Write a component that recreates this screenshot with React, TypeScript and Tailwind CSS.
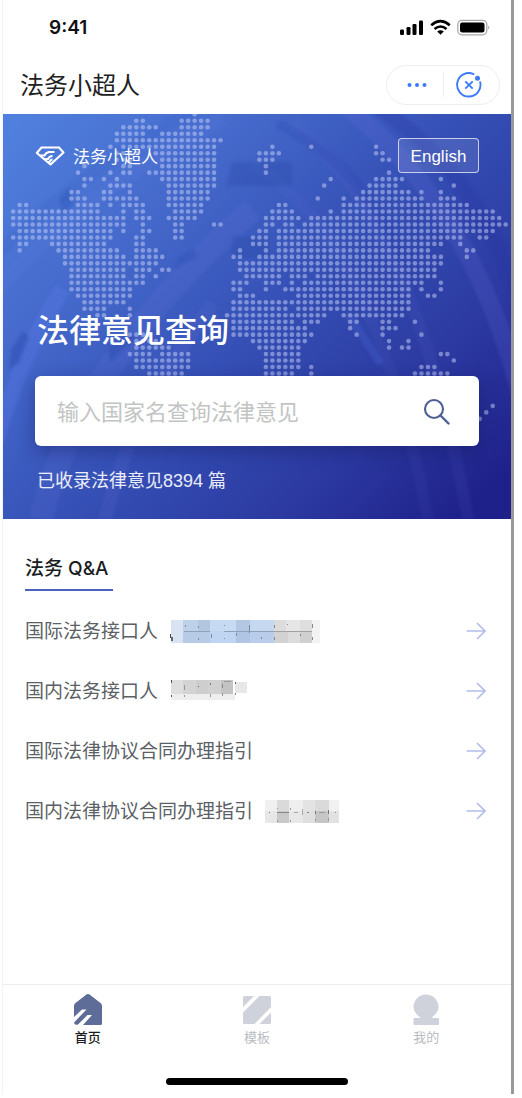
import React from "react";

const CJK = "font-['Inter','Noto_Sans_CJK_SC',sans-serif]";

type Span = [number, number];

// Dotted world map: for each row, the filled column spans.
const MAP_ROWS: Record<number, Span[]> = {
  [-1]: [[28, 28]],
  0: [[19, 20], [26, 30]],
  1: [[17, 22], [26, 30]],
  2: [[16, 20], [23, 29]],
  3: [[16, 32]],
  4: [[15, 15], [17, 31], [40, 40], [46, 46], [56, 56]],
  5: [[16, 19], [22, 31], [38, 41], [56, 57]],
  6: [[16, 18], [23, 31], [38, 40], [57, 58]],
  7: [[11, 11], [17, 18], [23, 31], [39, 39]],
  8: [[10, 10], [15, 15], [17, 18], [21, 31], [39, 39], [58, 58]],
  9: [[11, 12], [14, 14], [16, 16], [23, 31], [49, 49], [56, 60], [66, 66]],
  10: [[11, 11], [15, 18], [24, 31], [48, 48], [55, 59], [68, 68]],
  11: [[9, 10], [14, 15], [18, 18], [24, 30], [54, 61], [63, 63], [66, 66]],
  12: [[9, 11], [14, 19], [24, 30], [47, 47], [51, 51], [53, 63], [66, 68]],
  13: [[1, 2], [10, 13], [15, 15], [17, 20], [24, 29], [41, 42], [51, 70]],
  14: [[0, 13], [17, 17], [19, 20], [25, 29], [40, 43], [49, 49], [51, 74]],
  15: [[0, 17], [19, 21], [24, 28], [39, 44], [46, 75]],
  16: [[0, 17], [20, 20], [25, 26], [31, 32], [39, 40], [42, 43], [45, 76]],
  17: [[1, 15], [17, 17], [20, 21], [25, 26], [38, 39], [41, 74]],
  18: [[0, 15], [19, 20], [25, 26], [37, 39], [41, 69], [72, 73]],
  19: [[1, 2], [6, 14], [19, 20], [37, 39], [41, 66], [69, 69]],
  20: [[1, 1], [7, 16], [19, 22], [35, 35], [39, 39], [41, 64], [70, 71]],
  21: [[8, 17], [19, 23], [34, 35], [38, 66], [70, 70]],
  22: [[8, 22], [35, 66]],
  23: [[9, 17], [19, 21], [23, 24], [35, 65]],
  24: [[9, 17], [19, 20], [22, 22], [36, 41], [43, 45], [47, 65]],
  25: [[9, 20], [34, 36], [39, 41], [43, 43], [45, 63], [66, 66]],
  26: [[9, 18], [34, 35], [39, 39], [42, 61], [63, 63], [66, 66]],
  27: [[10, 18], [35, 37], [44, 61], [64, 65]],
  28: [[11, 17], [34, 61]],
  29: [[11, 14], [18, 18], [34, 42], [44, 61]],
  30: [[13, 14], [18, 18], [33, 48], [51, 60]],
  31: [[34, 43], [45, 47], [52, 53], [57, 58], [62, 62]],
  32: [[34, 45], [52, 52], [57, 59]],
  33: [[18, 21], [34, 46], [53, 53], [57, 57], [63, 63]],
  34: [[19, 22], [37, 45], [58, 58], [61, 61]],
  35: [[19, 24], [38, 44], [58, 58], [60, 61]],
  36: [[18, 21], [23, 27], [39, 44], [66, 67]],
  37: [[19, 27], [39, 44], [68, 68]],
  38: [[19, 27], [39, 44], [46, 46], [63, 65]],
  39: [[21, 26], [39, 43], [46, 46], [62, 67]],
  44: [[74, 74]],
  45: [[73, 73]],
  46: [[72, 72]],
};

const DOTS = Object.entries(MAP_ROWS).flatMap(([row, spans]) =>
  spans.flatMap(([from, to]) =>
    Array.from({ length: to - from + 1 }, (_, i) => ({
      x: 10.2 + (from + i) * 6.48,
      y: 6.8 + Number(row) * 6.48,
    })),
  ),
);

function HeroArt() {
  return (
    <svg
      aria-hidden="true"
      className="absolute inset-0 h-full w-full"
      viewBox="0 0 508 405"
      preserveAspectRatio="none"
    >
      <defs>
        <linearGradient id="sky" gradientUnits="userSpaceOnUse" x1="20" y1="0" x2="440" y2="420">
          <stop offset="0" stopColor="#5080dd" />
          <stop offset="0.25" stopColor="#466bcd" />
          <stop offset="0.55" stopColor="#344eb4" />
          <stop offset="0.8" stopColor="#2b389f" />
          <stop offset="1" stopColor="#1f218a" />
        </linearGradient>
        <filter id="soft">
          <feGaussianBlur stdDeviation="1.5" />
        </filter>
      </defs>
      <rect width="508" height="405" fill="url(#sky)" />
      <g fill="none" filter="url(#soft)" opacity="0.6">
        <path d="M-10 145 Q60 70 190 -5" stroke="#2c55bd" strokeOpacity=".25" strokeWidth="12" />
        <path d="M-10 180 Q70 85 220 5" stroke="#6d8ae8" strokeOpacity=".16" strokeWidth="14" />
        <path d="M38 405 Q75 250 250 95" stroke="#7d82e6" strokeOpacity=".2" strokeWidth="24" />
        <path d="M-8 330 Q20 235 60 175" stroke="#5d7ff0" strokeOpacity=".45" strokeWidth="16" />
        <path d="M102 405 Q130 290 210 190" stroke="#7d82e6" strokeOpacity=".18" strokeWidth="14" />
        <path d="M290 10 Q410 100 465 405" stroke="#6a78dc" strokeOpacity=".16" strokeWidth="12" />
        <path d="M250 50 Q370 120 425 405" stroke="#6a78dc" strokeOpacity=".12" strokeWidth="12" />
        <path d="M340 -10 Q470 90 520 290" stroke="#6a70df" strokeOpacity=".3" strokeWidth="18" />
        <path d="M370 -10 Q480 60 520 200" stroke="#2233a0" strokeOpacity=".4" strokeWidth="16" />
        <path d="M275 10 Q360 50 400 150" stroke="#2537a4" strokeOpacity=".3" strokeWidth="10" />
        <path d="M345 200 L378 250" stroke="#4a68d8" strokeOpacity=".5" strokeWidth="8" />
      </g>
      <g fill="#2547a9" fillOpacity=".35" filter="url(#soft)">
        <path d="M229 48h60v24h-66z" />
        <path d="M229 122h38v22h-38z" />
        <path d="M175 144l15-9 4 8-22 12z" fillOpacity=".3" />
        <path d="M56 85l10-12 4 18-10 8z" fillOpacity=".3" />
        <path d="M8 235l12-18 6 6-10 26-10 6z" fillOpacity=".4" />
        <path d="M105 234l18-16 10 6-26 24z" fillOpacity=".4" />
      </g>
      <g fill="#c4cdf6" fillOpacity=".52">
        {DOTS.map((d, i) => (
          <circle key={i} cx={d.x} cy={d.y} r="2.3" />
        ))}
      </g>
    </svg>
  );
}

function StatusIcons() {
  return (
    <svg aria-hidden="true" className="h-5 w-[92px]" viewBox="0 0 92 20">
      <rect x="1" y="11.5" width="4" height="5.5" rx="1.2" />
      <rect x="7.5" y="9" width="4" height="8" rx="1.2" />
      <rect x="13.5" y="6" width="4" height="11" rx="1.2" />
      <rect x="20" y="2.5" width="4" height="14.5" rx="1.2" />
      <g fill="none" stroke="#000" strokeWidth="2.6">
        <path d="M32.2 7.2q9.300-8 18.600 0" />
        <path d="M35.5 11q6-5 12 0" />
      </g>
      <path d="M38.200 13.500q3.300-2.500 6.600 0l-3.300 3.200z" />
      <rect x="58.8" y="2.3" width="29" height="14.5" rx="4.2" fill="none" stroke="#aaa" strokeWidth="1.3" />
      <rect x="61" y="4.5" width="24.5" height="10" rx="2.2" />
      <path d="M89.300 7.500q2.200 2 0 4z" fill="#999" />
    </svg>
  );
}

function DiamondLogo() {
  return (
    <svg aria-hidden="true" className="h-5 w-[30px]" viewBox="0 0 30 20" fill="none" stroke="#fff">
      <path d="M6.500 1.500H24l4.500 5L15.500 18.500 1.800 7z" strokeWidth="2.100" strokeLinejoin="round" />
      <path d="M5 9.500h4.500Q11 6.500 14 6h5.500M9 13h4q1.500-3 4.500-3M12.500 16h2q1-2.500 3-2.500" strokeWidth="2" />
    </svg>
  );
}

function Arrow() {
  return (
    <svg aria-hidden="true" className="h-5 w-5 shrink-0" viewBox="0 0 20 20" fill="none" stroke="#b3bdec" strokeWidth="1.6">
      <path d="M.5 10h18.500M11 2l8 8-8 8" />
    </svg>
  );
}

type Cell = [number, number, number, number, string];

const MASK_A: Cell[] = [
  [1, 0, 12, 23, "#d9e4f2"], [13, 0, 15, 11, "#bfd1e8"], [28, 0, 12, 11, "#b2c6e0"],
  [40, 0, 26, 11, "#c6daf2"], [66, 0, 14, 11, "#b3c7e2"], [80, 0, 24, 11, "#c5d8ef"],
  [104, 0, 12, 11, "#dcdcdc"], [116, 0, 14, 11, "#e6e6e6"], [130, 0, 12, 11, "#dedede"],
  [142, 0, 8, 23, "#f3f3f3"], [13, 11, 27, 12, "#b7cbe6"], [40, 11, 26, 12, "#bfd5f2"],
  [66, 11, 14, 12, "#b0c5e3"], [80, 11, 24, 12, "#b9cdea"], [104, 11, 14, 12, "#d2d2d2"],
  [118, 11, 12, 12, "#dcdcdc"], [130, 11, 12, 12, "#d0d0d0"],
  [14, 11, 26, 1, "#8fa2bd"], [54, 11, 50, 1, "#8da0bd"], [104, 11, 38, 1, "#a2a2a2"],
  [15, 5, 1, 2, "#7c8ba3"], [28, 6, 1, 2, "#7c8ba3"], [41, 14, 1, 4, "#7c8ba3"],
  [54, 5, 1, 1, "#7c8ba3"], [66, 13, 1, 3, "#7c8ba3"], [79, 5, 1, 8, "#7c8ba3"],
  [91, 17, 1, 2, "#7c8ba3"], [104, 5, 1, 3, "#888"], [117, 4, 1, 1, "#888"],
  [130, 14, 1, 2, "#888"], [142, 4, 1, 4, "#888"], [142, 17, 1, 3, "#888"],
  [28, 18, 1, 2, "#7c8ba3"], [54, 18, 1, 1, "#7c8ba3"], [104, 17, 1, 3, "#888"],
  [0, 14, 1, 4, "#444"], [1, 17, 2, 4, "#666"],
];
const MASK_B: Cell[] = [
  [1, 0, 12, 14, "#dedede"], [13, 0, 13, 14, "#d4d4d4"], [26, 0, 12, 14, "#cecece"],
  [38, 0, 13, 14, "#d1d1d1"], [51, 0, 12, 14, "#c4c4c4"], [65, 2, 12, 11, "#e7e7e7"],
  [1, 14, 64, 6, "#eeeeee"], [14, 5, 1, 5, "#999"], [28, 6, 1, 1, "#666"],
  [40, 3, 1, 2, "#777"], [52, 4, 1, 4, "#888"], [54, 1, 7, 1, "#999"],
  [65, 2, 1, 2, "#666"], [65, 13, 1, 2, "#888"], [14, 15, 1, 2, "#999"],
  [40, 14, 1, 3, "#999"], [52, 13, 1, 3, "#999"], [1, 0, 1, 3, "#555"], [1, 15, 1, 2, "#555"],
];
const MASK_C: Cell[] = [
  [0, 0, 12, 11, "#f0f0f0"], [12, 0, 12, 11, "#dadada"], [24, 0, 14, 11, "#eeeeee"],
  [38, 0, 12, 11, "#e3e3e3"], [50, 0, 14, 11, "#dadada"], [64, 0, 10, 11, "#f1f1f1"],
  [0, 11, 12, 12, "#e7e7e7"], [12, 11, 12, 12, "#c9c9c9"], [24, 11, 14, 12, "#e8e8e8"],
  [38, 11, 12, 12, "#dfdfdf"], [50, 11, 14, 12, "#c6c6c6"], [64, 11, 10, 12, "#e2e2e2"],
  [12, 12, 12, 1, "#888"], [4, 12, 1, 1, "#777"], [29, 12, 4, 1, "#aaa"], [42, 12, 2, 1, "#888"],
  [50, 11, 1, 3, "#777"], [63, 10, 1, 4, "#777"], [25, 8, 1, 2, "#999"], [12, 8, 1, 1, "#999"],
  [37, 9, 1, 6, "#aaa"], [54, 12, 6, 1, "#999"], [50, 19, 1, 2, "#999"], [25, 20, 1, 2, "#999"],
  [12, 20, 1, 2, "#999"], [63, 18, 1, 3, "#999"], [70, 12, 1, 1, "#888"],
];

function Mask({ cells, width }: { cells: Cell[]; width: number }) {
  return (
    <svg aria-hidden="true" width={width} height="23" viewBox={`0 0 ${width} 23`} className="shrink-0">
      {cells.map(([x, y, w, h, fill], i) => (
        <rect key={i} x={x} y={y} width={w} height={h} fill={fill} />
      ))}
    </svg>
  );
}

const LINKS: { label: string; cells?: Cell[]; width?: number }[] = [
  { label: "国际法务接口人", cells: MASK_A, width: 150 },
  { label: "国内法务接口人", cells: MASK_B, width: 78 },
  { label: "国际法律协议合同办理指引" },
  { label: "国内法律协议合同办理指引", cells: MASK_C, width: 74 },
];

function HomeIcon() {
  return (
    <svg aria-hidden="true" className="h-8 w-8" viewBox="0 0 32 32" fill="#5d6d97">
      <path d="M14.800 1.300q1.200-.800 2.400 0l11.600 9q1.200 1 1.200 2.500V30.500q0 1.500-1.500 1.500H11l9-10h-4.500L6 31.500Q2.500 32.500 2 29.500L14.500 16.500H10L2 24V12.800q0-1.500 1.200-2.500z" />
    </svg>
  );
}

function TemplateIcon() {
  return (
    <svg aria-hidden="true" className="h-8 w-8" viewBox="0 0 32 32" fill="#cfd2da">
      <path d="M3.500 3H13L2 14V4.500Q2 3 3.500 3zM18.500 3h10Q30 3 30 4.500V14L13.500 31h-10Q2 31 2 29.500V19.500zM30 19.500v10q0 1.500-1.500 1.500H18.500z" />
    </svg>
  );
}

function MineIcon() {
  return (
    <svg aria-hidden="true" className="h-8 w-8" viewBox="0 0 32 32" fill="#cfd2da">
      <path d="M6.500 21Q3.500 18 3.500 14a12.500 12.500 0 0 1 25 0Q28.500 18 25.500 21l-4 4H28q1 0 1 1v5q0 1-1 1H4.500q-1 0-1-1v-5q0-1 1-1H10.500z" />
    </svg>
  );
}

const TABS = [
  { label: "首页", Icon: HomeIcon, active: true },
  { label: "模板", Icon: TemplateIcon, active: false },
  { label: "我的", Icon: MineIcon, active: false },
];

export default function App() {
  return (
    <div className="min-h-screen bg-white pr-2 pb-1 pl-[2px]">
      <div className={`flex min-h-[calc(100vh-4px)] flex-col border-r-[3px] border-l border-r-[#999] border-l-[#f3f3f3] bg-white ${CJK}`}>
        <header>
          <div className="flex h-14 items-center justify-between pr-5 pl-[46px]">
            <span className="text-[19px] font-semibold text-[#111]">9:41</span>
            <StatusIcons />
          </div>
          <div className="flex h-[58px] items-center justify-between pr-[11px] pl-[17px]">
            <h1 className="pt-[2px] text-2xl text-[#222]">法务小超人</h1>
            <div className="flex h-10 w-[114px] items-center rounded-full border border-[#eee]">
              <button type="button" aria-label="更多" className="flex flex-1 justify-center pl-1">
                <svg className="h-5 w-5" viewBox="0 0 20 20" fill="#3b7cf6">
                  <circle cx="2.500" cy="10" r="2" />
                  <circle cx="10" cy="10" r="2" />
                  <circle cx="17.500" cy="10" r="2" />
                </svg>
              </button>
              <span className="h-6 w-px bg-[#eee]" />
              <button type="button" aria-label="关闭" className="flex flex-1 justify-center pr-1">
                <svg className="h-[26px] w-[26px]" viewBox="0 0 26 26" fill="none" stroke="#3b7cf6" strokeWidth="1.9">
                  <path d="M17.500 2.100A11.700 11.700 0 1 0 24.200 10.200" strokeLinecap="round" />
                  <path d="M9.300 9.300l7.400 7.400M16.700 9.300l-7.400 7.400" />
                  <circle cx="21.500" cy="6.300" r="2.5" fill="#3b7cf6" stroke="none" />
                </svg>
              </button>
            </div>
          </div>
        </header>

        <section className="relative h-[405px] overflow-hidden">
          <HeroArt />
          <div className="relative px-8 pt-6 text-white">
            <div className="flex h-[35px] items-center justify-between">
              <div className="flex items-center gap-2">
                <DiamondLogo />
                <span className="pt-[3px] text-[17px] leading-9">法务小超人</span>
              </div>
              <button
                type="button"
                className="h-[35px] w-[81px] rounded-[4px] border border-white/70 bg-white/10 pt-[2px] font-['Liberation_Sans',sans-serif] text-[17px]"
              >
                English
              </button>
            </div>
            <h2 className="mt-[134px] pl-[2px] text-[32px] leading-12 font-medium">法律意见查询</h2>
            <form
              className="mt-[21px] flex h-[70px] items-center rounded-[6px] bg-white pr-7 pl-[22px] shadow-[0_6px_18px_rgba(20,25,90,0.4)]"
              onSubmit={(e) => e.preventDefault()}
            >
              <input
                type="text"
                aria-label="输入国家名查询法律意见"
                placeholder="输入国家名查询法律意见"
                className="min-w-0 flex-1 pt-[2px] text-[22px] text-[#333] outline-none placeholder:text-[#c2c4c4]"
              />
              <button type="submit" aria-label="搜索">
                <svg className="h-7 w-7" viewBox="0 0 28 28" fill="none" stroke="#4d5f94" strokeWidth="2.1">
                  <circle cx="11" cy="12" r="9" />
                  <path d="M17.500 18.500l8 8" strokeLinecap="round" strokeWidth="2.4" />
                </svg>
              </button>
            </form>
            <p className="mt-[21px] pl-[2px] font-['Liberation_Sans','Noto_Sans_CJK_SC',sans-serif] text-[18px] leading-7 text-white/90">
              已收录法律意见8394 篇
            </p>
          </div>
        </section>

        <main className="flex-1 pt-8 pr-[25px] pl-[22px]">
          <h2 className="inline-block border-b-2 border-[#4c62c0] pt-[2px] pr-1 pb-1 text-[19px] leading-8 font-medium text-[#1a1d22]">
            法务 Q&amp;A
          </h2>
          <ul className="mt-[10px]">
            {LINKS.map(({ label, cells, width }) => (
              <li key={label}>
                <a href="#" className="flex h-[60px] items-center text-[19px] text-[#5b5f66]">
                  <span className="pt-[2px]">{label}</span>
                  {cells && width && (
                    <span className="ml-3">
                      <Mask cells={cells} width={width} />
                    </span>
                  )}
                  <span className="ml-auto">
                    <Arrow />
                  </span>
                </a>
              </li>
            ))}
          </ul>
        </main>

        <nav className="flex h-[70px] border-t border-[#ececec] pt-2">
          {TABS.map(({ label, Icon, active }) => (
            <a
              key={label}
              href="#"
              className={`flex flex-1 flex-col items-center text-[13px] ${active ? "font-medium text-[#1a1d22]" : "text-[#b9bcc1]"}`}
            >
              <Icon />
              <span className="leading-6">{label}</span>
            </a>
          ))}
        </nav>
        <div className="flex h-10 items-center justify-center pt-[14px]">
          <div className="h-[7px] w-[182px] rounded-full bg-black" />
        </div>
      </div>
    </div>
  );
}
